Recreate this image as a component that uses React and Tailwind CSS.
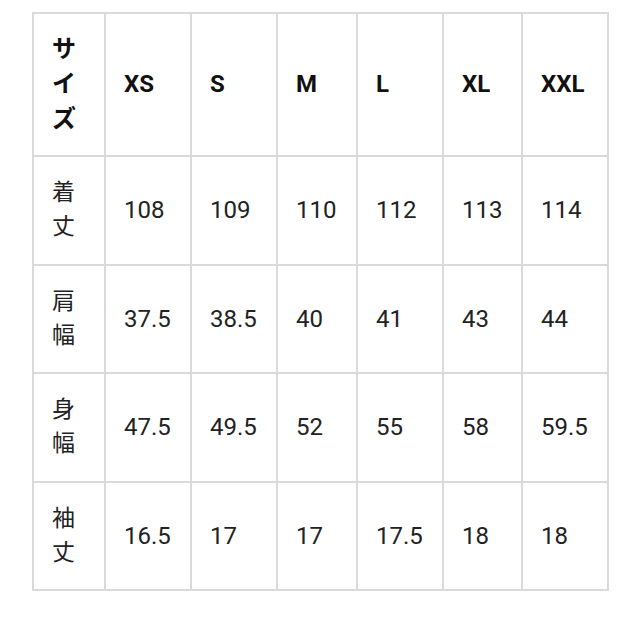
import React from "react";

const sizes = ["XS", "S", "M", "L", "XL", "XXL"];

const rows = [
  { label: "着丈", values: ["108", "109", "110", "112", "113", "114"] },
  { label: "肩幅", values: ["37.5", "38.5", "40", "41", "43", "44"] },
  { label: "身幅", values: ["47.5", "49.5", "52", "55", "58", "59.5"] },
  { label: "袖丈", values: ["16.5", "17", "17", "17.5", "18", "18"] },
];

const widths = ["w-[72px]", "w-[86px]", "w-[86px]", "w-[80px]", "w-[86px]", "w-[79px]", "w-[86px]"];

export default function App() {
  return (
    <div className="min-h-screen bg-white pl-[32px] pt-[12px] font-['Roboto','Noto_Sans_CJK_JP',sans-serif] text-[#222]">
      <table className="w-[575px] table-fixed border-collapse border-2 border-[#dadada]">
        <colgroup>
          {widths.map((w, i) => (
            <col key={i} className={w} />
          ))}
        </colgroup>
        <thead>
          <tr className="h-[143px]">
            <th className="border-2 border-[#dadada] px-[18px] text-left align-middle text-[24px] font-bold leading-[35px] text-[#111] break-all">
              サイズ
            </th>
            {sizes.map(s => (
              <th
                key={s}
                className="border-2 border-[#dadada] px-[18px] text-left align-middle text-[24px] font-bold leading-[35px] text-[#111]">
                {s}
              </th>
            ))}
          </tr>
        </thead>
        <tbody>
          {rows.map(row => (
            <tr key={row.label} className="h-[108.5px]">
              <td className="border-2 border-[#dadada] px-[18px] align-middle text-[23px] leading-[34px] break-all">
                {row.label}
              </td>
              {row.values.map((v, i) => (
                <td key={i} className="border-2 border-[#dadada] px-[18px] align-middle text-[24px] leading-[34px]">
                  {v}
                </td>
              ))}
            </tr>
          ))}
        </tbody>
      </table>
    </div>
  );
}
